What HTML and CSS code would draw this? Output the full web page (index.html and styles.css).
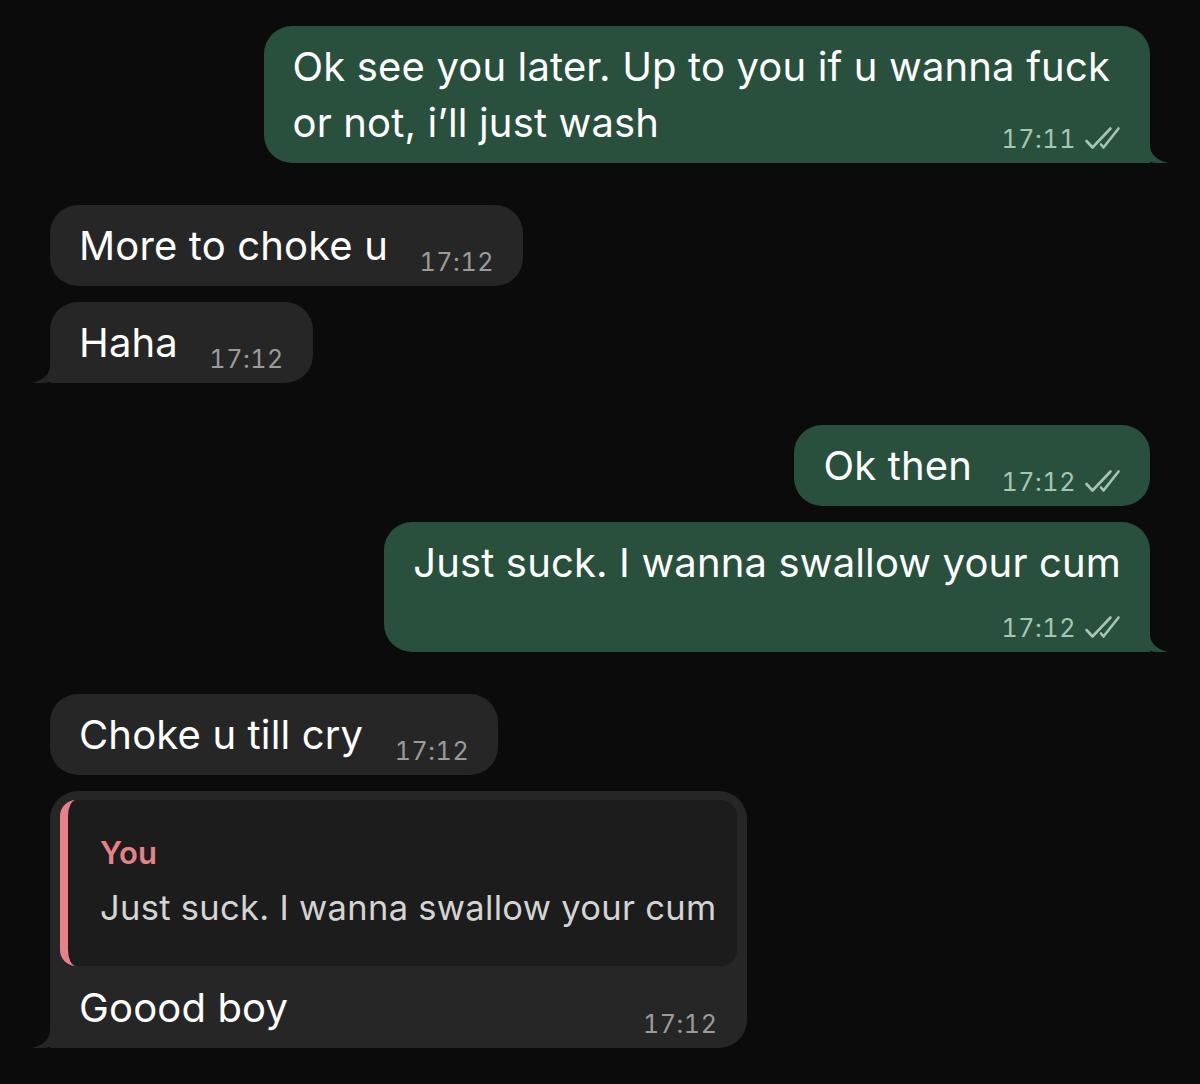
FILE: index.html
```html
<!DOCTYPE html>
<html lang="en">
<head>
<meta charset="utf-8">
<title>Chat</title>
<link rel="stylesheet" href="styles.css">
</head>
<body>
<div class="chat">
  <div class="bubble out tail wide">
    <div class="text">Ok see you later. Up to you if u wanna fuck<br>or not, i’ll just wash<span class="spacer"></span></div>
    <div class="meta"><span class="time">17:11</span><svg class="ticks" viewBox="0 0 37 24"><path d="M2.5 15 L8.5 21.5 L26.5 2.5 M17 18.5 L19.5 21.5 L34.5 2.5"/></svg></div>
    <svg class="tail-svg" viewBox="0 0 30 30"><path d="M30 0 H19 V12 C19 21 13 27 1 30 C9 30.6 15 30 20 28.5 C23 29.5 26 30 30 30 Z"/></svg>
  </div>

  <div class="bubble in group-start">
    <div class="text">More to choke u<span class="spacer"></span></div>
    <div class="meta"><span class="time">17:12</span></div>
  </div>
  <div class="bubble in tail">
    <div class="text">Haha<span class="spacer"></span></div>
    <div class="meta"><span class="time">17:12</span></div>
    <svg class="tail-svg" viewBox="0 0 30 30"><path d="M30 0 H19 V12 C19 21 13 27 1 30 C9 30.6 15 30 20 28.5 C23 29.5 26 30 30 30 Z"/></svg>
  </div>

  <div class="bubble out group-start">
    <div class="text">Ok then<span class="spacer"></span></div>
    <div class="meta"><span class="time">17:12</span><svg class="ticks" viewBox="0 0 37 24"><path d="M2.5 15 L8.5 21.5 L26.5 2.5 M17 18.5 L19.5 21.5 L34.5 2.5"/></svg></div>
  </div>
  <div class="bubble out tail stacked">
    <div class="text">Just suck. I wanna swallow your cum</div>
    <div class="meta"><span class="time">17:12</span><svg class="ticks" viewBox="0 0 37 24"><path d="M2.5 15 L8.5 21.5 L26.5 2.5 M17 18.5 L19.5 21.5 L34.5 2.5"/></svg></div>
    <svg class="tail-svg" viewBox="0 0 30 30"><path d="M30 0 H19 V12 C19 21 13 27 1 30 C9 30.6 15 30 20 28.5 C23 29.5 26 30 30 30 Z"/></svg>
  </div>

  <div class="bubble in group-start">
    <div class="text">Choke u till cry<span class="spacer"></span></div>
    <div class="meta"><span class="time">17:12</span></div>
  </div>
  <div class="bubble in tail reply">
    <div class="quote">
      <div class="quote-name">You</div>
      <div class="quote-text">Just suck. I wanna swallow your cum</div>
    </div>
    <div class="reply-body">
      <div class="text">Goood boy</div>
      <div class="meta"><span class="time">17:12</span></div>
    </div>
    <svg class="tail-svg" viewBox="0 0 30 30"><path d="M30 0 H19 V12 C19 21 13 27 1 30 C9 30.6 15 30 20 28.5 C23 29.5 26 30 30 30 Z"/></svg>
  </div>
</div>
</body>
</html>
```

FILE: styles.css
```css
html, body {
  margin: 0;
  padding: 0;
  background: #0b0b0b;
}

body {
  font-family: Inter, "Noto Sans", "Liberation Sans", sans-serif;
  color: #ffffff;
  height: 1084px;
  overflow: hidden;
}

.chat {
  display: flex;
  flex-direction: column;
  padding: 26px 50px 0 50px;
  gap: 16px;
}

.bubble {
  position: relative;
  display: grid;
  padding: 13px 0 12px 29px;
  border-radius: 28px;
  max-width: 900px;
}

.bubble.group-start {
  margin-top: 26px;
}

.bubble.in {
  align-self: flex-start;
  background: #262626;
  padding-right: 29px;
}

.bubble.out {
  align-self: flex-end;
  background: #28503d;
  padding-right: 29px;
}

.bubble.out.wide {
  padding-right: 40px;
}

.text {
  grid-area: 1 / 1;
  font-size: 40px;
  line-height: 56px;
  letter-spacing: 0.15px;
  white-space: nowrap;
}

.spacer {
  display: inline-block;
  width: 106px;
  height: 1px;
}

.out .spacer {
  width: 149px;
}

.meta {
  grid-area: 1 / 1;
  justify-self: end;
  align-self: end;
  display: flex;
  align-items: center;
  gap: 8px;
  height: 30px;
  margin-bottom: -3px;
}

.wide .meta {
  margin-right: -11px;
}

.time {
  font-size: 25px;
  line-height: 30px;
  font-variant-numeric: tabular-nums;
  letter-spacing: 0.6px;
  color: #9b9b9b;
}

.out .time {
  color: #a6c6b5;
}

.ticks {
  width: 37px;
  height: 24px;
  margin-top: -2px;
  fill: none;
  stroke: #a6c6b5;
  stroke-width: 2.6;
  stroke-linecap: round;
  stroke-linejoin: round;
}

.stacked .meta {
  grid-area: 2 / 1;
  margin-top: 22px;
}

/* tails */
.bubble.tail.in {
  border-bottom-left-radius: 0;
}

.bubble.tail.out {
  border-bottom-right-radius: 0;
}

.tail-svg {
  position: absolute;
  bottom: 0;
  width: 30px;
  height: 30px;
}

.in .tail-svg {
  left: -19px;
  fill: #262626;
}

.out .tail-svg {
  right: -19px;
  fill: #28503d;
  transform: scaleX(-1);
}

/* reply bubble */
.bubble.reply {
  display: flex;
  flex-direction: column;
  padding: 9px 10px 12px 10px;
}

.quote {
  background: #1c1c1c;
  border-left: 8px solid #e8808a;
  border-radius: 16px;
  padding: 33px 21px 33px 32px;
}

.quote-name {
  font-size: 31px;
  line-height: 40px;
  font-weight: 600;
  color: #e8808a;
}

.quote-text {
  font-size: 34.5px;
  line-height: 50px;
  margin-top: 10px;
  color: #d4d4d4;
  white-space: nowrap;
  letter-spacing: 0.3px;
}

.reply-body {
  display: grid;
  padding: 14px 20px 0 19px;
}
```
